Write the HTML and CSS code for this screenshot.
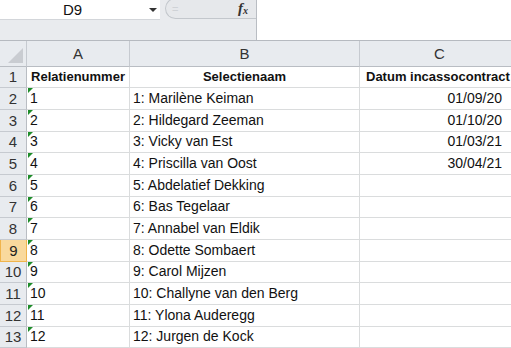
FILE: index.html
```html
<!DOCTYPE html>
<html>
<head>
<meta charset="UTF-8">
<title>Relaties</title>
<link rel="stylesheet" href="styles.css">
</head>
<body>

<div class="topbar">
	<div class="namebox">
		<span class="cellref">D9</span>
		<span class="arrow"></span>
	</div>
	<div class="fxbox">
		<span class="dots">=</span>
		<span class="fx">f<sub>x</sub></span>
	</div>
	<div class="formula"></div>
</div>

<div class="sheet">
	<div class="hd corner"><span class="tri"></span></div>
	<div class="hd">A</div>
	<div class="hd">B</div>
	<div class="hd">C</div>

	<div class="rh">1</div>
	<div class="c title">Relatienummer</div>
	<div class="c title">Selectienaam</div>
	<div class="c title">Datum incassocontract</div>

	<div class="rh">2</div>
	<div class="c txt">1</div>
	<div class="c">1: Marilène Keiman</div>
	<div class="c date">01/09/20</div>

	<div class="rh">3</div>
	<div class="c txt">2</div>
	<div class="c">2: Hildegard Zeeman</div>
	<div class="c date">01/10/20</div>

	<div class="rh">4</div>
	<div class="c txt">3</div>
	<div class="c">3: Vicky van Est</div>
	<div class="c date">01/03/21</div>

	<div class="rh">5</div>
	<div class="c txt">4</div>
	<div class="c">4: Priscilla van Oost</div>
	<div class="c date">30/04/21</div>

	<div class="rh">6</div>
	<div class="c txt">5</div>
	<div class="c">5: Abdelatief Dekking</div>
	<div class="c"></div>

	<div class="rh">7</div>
	<div class="c txt">6</div>
	<div class="c">6: Bas Tegelaar</div>
	<div class="c"></div>

	<div class="rh">8</div>
	<div class="c txt">7</div>
	<div class="c">7: Annabel van Eldik</div>
	<div class="c"></div>

	<div class="rh sel">9</div>
	<div class="c txt">8</div>
	<div class="c">8: Odette Sombaert</div>
	<div class="c"></div>

	<div class="rh">10</div>
	<div class="c txt">9</div>
	<div class="c">9: Carol Mijzen</div>
	<div class="c"></div>

	<div class="rh">11</div>
	<div class="c txt">10</div>
	<div class="c">10: Challyne van den Berg</div>
	<div class="c"></div>

	<div class="rh">12</div>
	<div class="c txt">11</div>
	<div class="c">11: Ylona Auderegg</div>
	<div class="c"></div>

	<div class="rh">13</div>
	<div class="c txt">12</div>
	<div class="c">12: Jurgen de Kock</div>
	<div class="c"></div>
</div>

</body>
</html>
```

FILE: styles.css
```css
* {box-sizing: border-box;}
body {margin: 0; width: 511px; height: 348px; overflow: hidden; font-family: "Liberation Sans", Arial, sans-serif; font-size: 14px; color: #111;}

/* formule balk */
.topbar {display: flex; height: 41px; background: #e9ebee; border-bottom: 1px solid #b6bac0;}
.namebox {display: flex; align-items: center; width: 160px; height: 20px; background: #fff; border-bottom: 1px solid #d3d6da;}
.cellref {width: 145px; text-align: center; font-size: 15px; color: #111;}
.arrow {width: 0; height: 0; border-left: 4px solid transparent; border-right: 4px solid transparent; border-top: 4px solid #333; margin-left: 4px;}
.fxbox {display: flex; align-items: center; justify-content: space-between; width: 91px; height: 21px; margin: -2px 0 0 5px; padding: 0 8px 0 6px; background: #e6e8eb; border: 1px solid #c3c7cc; border-right: none; border-radius: 11px 0 0 11px;}
.dots {color: #cfd2d6; font-size: 11px;}
.fx {font-family: "Liberation Serif", serif; font-style: italic; font-weight: bold; font-size: 15px; color: #333;}
.fx sub {font-size: 10px; vertical-align: -1px;}
.formula {flex: 1; height: 40px; background: #fff; border-left: 1px solid #b9bdc3;}

/* werkblad */
.sheet {display: grid; grid-template-columns: 27px 103px 230px 160px; grid-template-rows: 25.7px repeat(13, 21.67px);}
.hd {display: flex; align-items: center; justify-content: center; background: #e8ebef; border-right: 1px solid #c6cad0; border-bottom: 1px solid #b9bdc3; color: #333; font-size: 15px;}
.corner {justify-content: flex-end; align-items: flex-end;}
.tri {width: 0; height: 0; border-left: 15px solid transparent; border-bottom: 15px solid #c9ccd1; margin: 0 3px 3px 0;}
.rh {display: flex; align-items: flex-end; justify-content: center; padding-bottom: 2px; background: #e8ebef; border-right: 1px solid #b9bdc3; border-bottom: 1px solid #c6cad0; color: #333; font-size: 15px;}
.rh.sel {background: #f9d99d; border: 1px solid #f0b44c; border-top: none; color: #222;}
.c {display: flex; align-items: flex-end; padding: 0 3px 3px 3px; border-right: 1px solid #dadcdd; border-bottom: 1px solid #dadcdd; white-space: nowrap;}
.title {font-weight: bold; justify-content: center; font-size: 13px;}
.sheet .title:nth-child(8) {justify-content: flex-start; padding-left: 6px;}
.date {justify-content: flex-end; padding-right: 17px;}
.txt {position: relative;}
.txt::before {content: ""; position: absolute; left: 1px; top: 0; border-top: 5px solid #1e8c2a; border-right: 5px solid transparent;}
```
